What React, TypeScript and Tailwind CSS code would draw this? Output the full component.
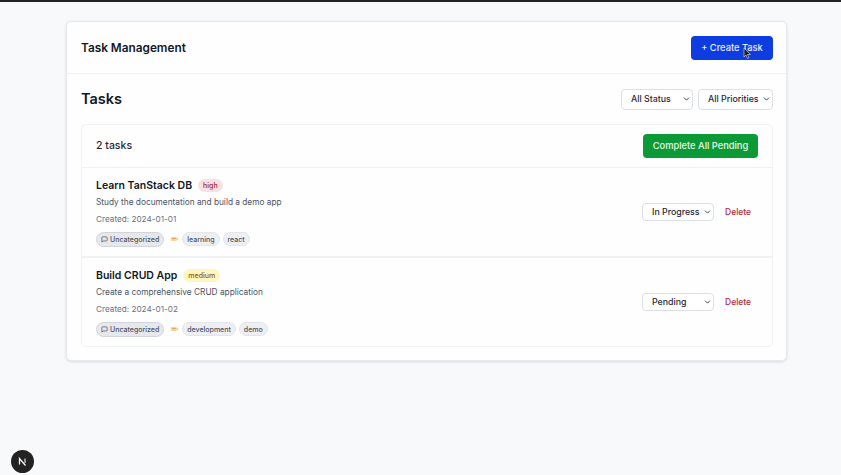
import React from "react";
import { ChevronDown } from "lucide-react";

function Select({ options, width }: { options: string[]; width: string }) {
  return (
    <div className={`relative ${width}`}>
      <select className="block h-full w-full appearance-none rounded-[4px] border border-[#dcdfe4] bg-white pl-[9px] text-[8.800px] font-medium text-[#1f2937] outline-none">
        {options.map((o) => (
          <option key={o}>{o}</option>
        ))}
      </select>
      <ChevronDown className="pointer-events-none absolute right-[2px] top-1/2 h-[9px] w-[9px] -translate-y-1/2 text-[#374151]" strokeWidth={2.5} />
    </div>
  );
}

function Pill({ children }: { children: React.ReactNode }) {
  return (
    <span className="flex h-[14px] items-center rounded-full border border-[#e3e5e9] bg-[#eeeff2] px-[4px] text-[7px] font-medium leading-none text-[#4b5563]">
      {children}
    </span>
  );
}

function Task({
  title,
  priority,
  priorityClass,
  description,
  created,
  tags,
  status,
  last,
}: {
  title: string;
  priority: string;
  priorityClass: string;
  description: string;
  created: string;
  tags: string[];
  status: string;
  last?: boolean;
}) {
  return (
    <div className={`flex items-center justify-between pl-[14px] pr-[21px] ${last ? "h-[88px]" : "h-[90px] border-b-2 border-[#f0f1f4]"}`}>
      <div className="flex flex-col">
        <div className="mt-[1px] flex items-center gap-[6px]">
          <h3 className="text-[10.500px] font-semibold leading-[14px] text-[#111827]">{title}</h3>
          <span className={`flex h-[13px] items-center rounded-full px-[5px] text-[7px] font-medium leading-none ${priorityClass}`}>{priority}</span>
        </div>
        <p className="mt-[3px] text-[8.300px] leading-[12px] text-[#4b5563]">{description}</p>
        <p className="mt-[5px] text-[8.200px] leading-[12px] text-[#6b7280]">{created}</p>
        <div className="mt-[7px] flex items-center">
          <span className="flex h-[15px] items-center gap-[2px] rounded-full border border-[#d1d5db] bg-[#e7e8ec] px-[4px] text-[7px] font-medium leading-none text-[#4b5563]">
            <svg width="7" height="7" viewBox="0 0 24 24" fill="none" stroke="#4b5563" strokeWidth="2.500">
              <path d="M21 15a2 2 0 0 1-2 2H7l-4 4V5a2 2 0 0 1 2-2h14a2 2 0 0 1 2 2z" />
            </svg>
            Uncategorized
          </span>
          <svg className="ml-[7px] mr-[3px]" width="8" height="6" viewBox="0 0 8 6">
            <path d="M0 1h5l3 2-3 2H0z" fill="#f8d58c" />
            <path d="M1 2.500h4" stroke="#e59a5a" strokeWidth="0.800" />
          </svg>
          <div className="flex items-center gap-[3px]">
            {tags.map((t) => (
              <Pill key={t}>{t}</Pill>
            ))}
          </div>
        </div>
      </div>
      <div className="flex items-center gap-[11px]">
        <Select options={[status]} width="h-[18px] w-[72px]" />
        <button className="w-[26px] text-[8.500px] font-medium leading-none text-[#b42b3a]">Delete</button>
      </div>
    </div>
  );
}

export default function App() {
  return (
    <div className="h-[475px] w-[841px] overflow-hidden bg-[#f8f9fb] font-['Inter',sans-serif] relative">
      <div className="h-[2px] bg-[#222222]" />
      <div className="ml-[66px] mt-[19px] w-[721px] rounded-[5px] border border-[#e8e9ed] bg-[#fefefe] shadow-[0_1px_3px_rgba(0,0,0,0.12)]">
        <header className="flex h-[52px] items-center justify-between border-b border-[#f0f1f4] pl-[14px] pr-[13px]">
          <h1 className="mt-[2px] text-[11.800px] font-semibold text-[#111827]">Task Management</h1>
          <div className="relative">
            <button className="block h-[24px] w-[82px] rounded-[4px] bg-[#0d3de0] text-[9.300px] font-medium text-[#e6ebff]">+ Create Task</button>
            <svg className="absolute left-[52px] top-[12px]" width="8" height="11" viewBox="0 0 8 11">
              <path d="M1 0v9l2-2 1.500 3.500 1.500-.7L4.500 6.500H7.500z" fill="#222" stroke="#fff" strokeWidth="0.500" />
            </svg>
          </div>
        </header>
        <div className="pb-[13px] pl-[14px] pr-[13px]">
          <div className="flex h-[50px] items-center justify-between">
            <h2 className="text-[14.500px] font-semibold text-[#111827]">Tasks</h2>
            <div className="flex gap-[5px]">
              <Select options={["All Status"]} width="h-[21px] w-[72px]" />
              <Select options={["All Priorities"]} width="h-[21px] w-[75px]" />
            </div>
          </div>
          <div className="rounded-[5px] border border-[#f2f3f5] bg-[#fefefe]">
            <div className="flex h-[43px] items-center justify-between border-b border-[#f0f1f4] px-[14px]">
              <span className="text-[10.500px] font-medium text-[#1f2937]">2 tasks</span>
              <button className="h-[24px] w-[115px] rounded-[4px] bg-[#0b9a36] text-[9.300px] font-medium text-[#e8f8ec]">Complete All Pending</button>
            </div>
            <Task
              title="Learn TanStack DB"
              priority="high"
              priorityClass="bg-[#f8e1e1] text-[#a3262e]"
              description="Study the documentation and build a demo app"
              created="Created: 2024-01-01"
              tags={["learning", "react"]}
              status="In Progress"
            />
            <Task
              title="Build CRUD App"
              priority="medium"
              priorityClass="bg-[#fdf7bf] text-[#8f5a1c]"
              description="Create a comprehensive CRUD application"
              created="Created: 2024-01-02"
              tags={["development", "demo"]}
              status="Pending"
              last
            />
          </div>
        </div>
      </div>
      <div className="absolute bottom-[2px] left-[11px] flex h-[23px] w-[23px] items-center justify-center rounded-full bg-[#222222]">
        <svg width="11" height="11" viewBox="0 0 11 11" fill="none">
          <path d="M2.500 8.500V2.500L8.500 9.500" stroke="#f4f4f4" strokeWidth="1.300" />
          <path d="M8 2.500V7" stroke="#cccccc" strokeWidth="1.300" />
        </svg>
      </div>
    </div>
  );
}
